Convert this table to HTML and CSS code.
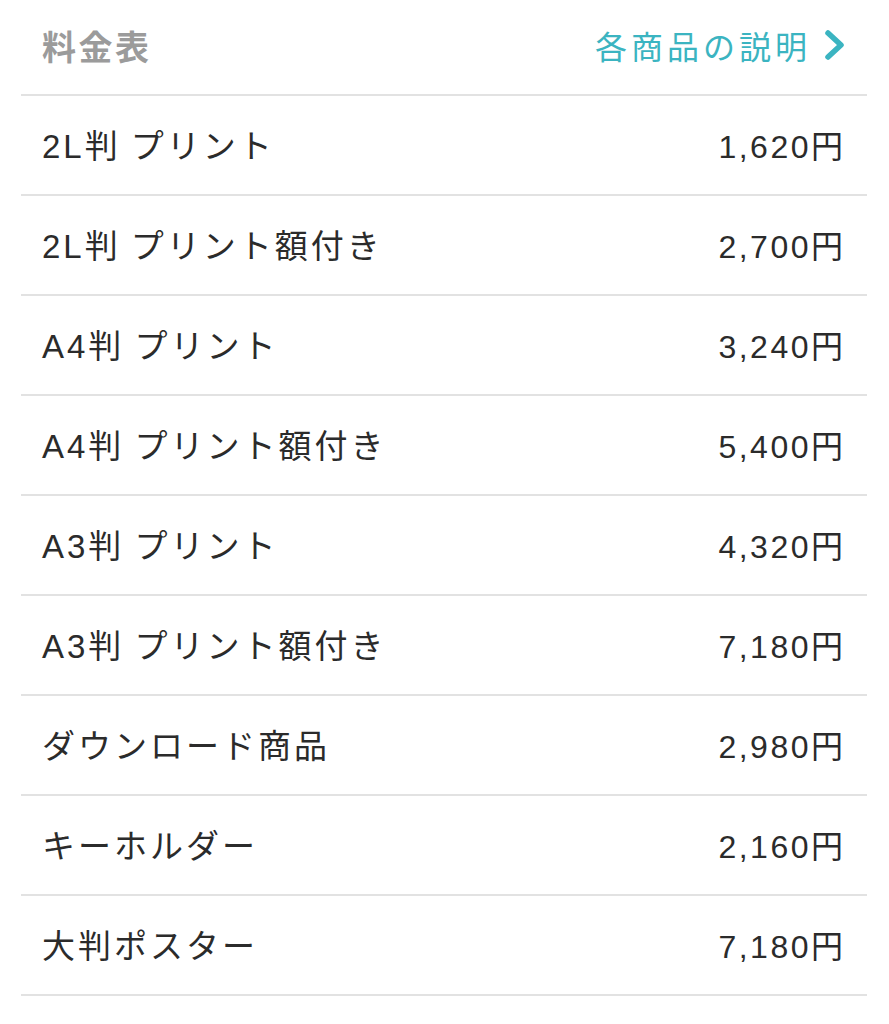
FILE: index.html
```html
<!DOCTYPE html>
<html lang="ja">
<head>
<meta charset="utf-8">
<link rel="stylesheet" href="styles.css">
</head>
<body>
<div class="table">
  <div class="head">
    <span class="title">料金表</span>
    <a class="link">各商品の説明<svg class="chev" viewBox="0 0 22 32" width="22" height="32"><polyline points="4,4 17,16 4,28" fill="none" stroke="#3bb4c1" stroke-width="5.5" stroke-linecap="round" stroke-linejoin="round"/></svg></a>
  </div>
  <div class="row"><span class="name">2L判 プリント</span><span class="price">1,620円</span></div>
  <div class="row"><span class="name">2L判 プリント額付き</span><span class="price">2,700円</span></div>
  <div class="row"><span class="name">A4判 プリント</span><span class="price">3,240円</span></div>
  <div class="row"><span class="name">A4判 プリント額付き</span><span class="price">5,400円</span></div>
  <div class="row"><span class="name">A3判 プリント</span><span class="price">4,320円</span></div>
  <div class="row"><span class="name">A3判 プリント額付き</span><span class="price">7,180円</span></div>
  <div class="row"><span class="name">ダウンロード商品</span><span class="price">2,980円</span></div>
  <div class="row"><span class="name">キーホルダー</span><span class="price">2,160円</span></div>
  <div class="row last"><span class="name">大判ポスター</span><span class="price">7,180円</span></div>
</div>
</body>
</html>
```
FILE: styles.css
```css
html, body {
  margin: 0;
  padding: 0;
  background: #fff;
}
body {
  font-family: "Liberation Sans", "Noto Sans CJK JP", sans-serif;
  color: #2b2b2b;
}
.table {
  margin: 0 22px 0 21px;
}
.head {
  height: 90px;
  padding-bottom: 4px;
  display: flex;
  align-items: center;
  justify-content: space-between;
  padding-left: 21px;
  padding-right: 21px;
}
.title {
  font-size: 34px;
  font-weight: bold;
  letter-spacing: 2.5px;
  color: #9b9b9b;
}
.link {
  display: flex;
  align-items: center;
  font-size: 32px;
  letter-spacing: 4px;
  color: #3bb4c1;
}
.chev {
  margin-left: 13px;
}
.row {
  height: 95px;
  padding-bottom: 3px;
  border-top: 2px solid #e2e2e2;
  display: flex;
  align-items: center;
  justify-content: space-between;
  padding-left: 21px;
  padding-right: 24px;
  font-size: 32px;
}
.name {
  font-size: 33px;
  letter-spacing: 3px;
  word-spacing: -2px;
}
.price {
  letter-spacing: 2.5px;
  margin-right: -2.5px;
}
.row.last {
  border-bottom: 2px solid #e2e2e2;
}
```
